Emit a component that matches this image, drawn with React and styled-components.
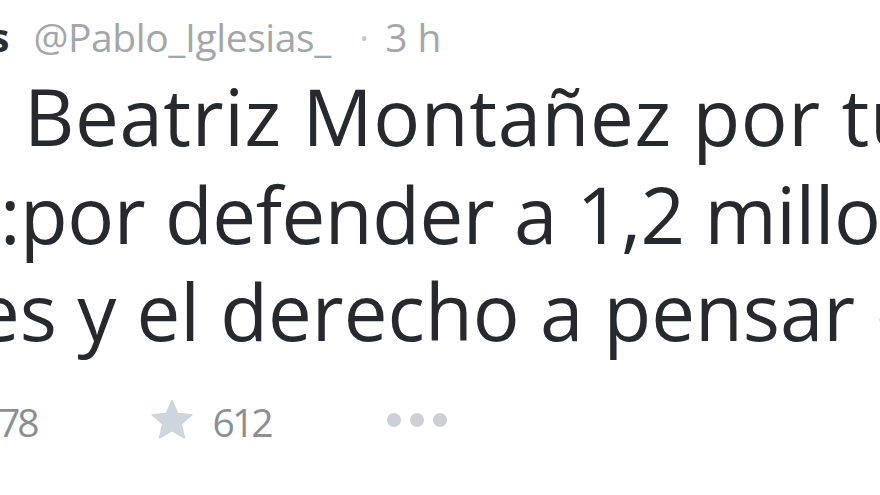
import React from "react";
import styled, { createGlobalStyle } from "styled-components";

const Global = createGlobalStyle`
  html, body { margin: 0; padding: 0; background: #ffffff; }
  #root { width: 880px; height: 495px; }
`;

const Frame = styled.div`
  width: 880px;
  height: 495px;
  overflow: hidden;
  background: #ffffff;
  font-family: "Open Sans", "Noto Sans", sans-serif;
  display: flex;
  flex-direction: column;
`;

const Header = styled.div`
  display: flex;
  align-items: baseline;
  white-space: nowrap;
  font-size: 39px;
  line-height: 48px;
  height: 48px;
  margin-top: 13px;
  margin-left: -10px;
`;

const Name = styled.span`
  font-weight: 700;
  color: #292f33;
`;

const Handle = styled.span`
  color: #a3a7ab;
  letter-spacing: ${(p) => p.$spacing || 0}px;
  margin-left: ${(p) => p.$gap || 0}px;
`;

const Dot = styled.span`
  color: #c6cacd;
  margin-left: ${(p) => p.$before}px;
  margin-right: ${(p) => p.$after}px;
`;

const Body = styled.div`
  margin-top: 7px;
  font-size: 78px;
  line-height: 97.5px;
  color: #262a2e;
  white-space: nowrap;
`;

const Line = styled.div`
  margin-left: ${(p) => p.$indent}px;
  letter-spacing: ${(p) => p.$spacing}px;
  height: 97.5px;
`;

const Actions = styled.div`
  display: flex;
  align-items: center;
  margin-top: 37px;
  height: 48px;
  font-size: 39px;
  color: #8b8f94;
  white-space: nowrap;
`;

const Count = styled.span`
  letter-spacing: -3px;
  margin-left: ${(p) => p.$gap}px;
`;

const StarIcon = styled.svg`
  width: 46px;
  height: 44px;
  margin-left: ${(p) => p.$gap}px;
  margin-top: -4px;
  flex: none;
`;

const More = styled.div`
  display: flex;
  gap: 9px;
  margin-left: ${(p) => p.$gap}px;
  margin-top: -4px;
`;

const MoreDot = styled.span`
  width: 14px;
  height: 14px;
  border-radius: 50%;
  background: #cdd0d4;
`;

export default function App() {
  return (
    <>
      <Global />
      <Frame>
        <Header>
          <Name>s</Name>
          <Handle $gap={24} $spacing={-0.4}>@Pablo_Iglesias_</Handle>
          <Dot $before={28} $after={16}>·</Dot>
          <Handle>3 h</Handle>
        </Header>
        <Body>
          <Line $indent={24} $spacing={0.6}>Beatriz Montañez por tu</Line>
          <Line $indent={0} $spacing={-0.45}>:por defender a 1,2 millones</Line>
          <Line $indent={-24} $spacing={0}>es y el derecho a pensar de</Line>
        </Body>
        <Actions>
          <Count $gap={-2}>78</Count>
          <StarIcon $gap={112} viewBox="0 0 24 24">
            <path
              d="M12 1.5l3.1 7.1 7.6.6-5.8 5 1.8 7.5L12 17.7l-6.7 4 1.8-7.5-5.8-5 7.6-.6z"
              fill="#cdd6de"
              stroke="#cdd6de"
              strokeWidth="1"
              strokeLinejoin="round"
            />
          </StarIcon>
          <Count $gap={18}>612</Count>
          <More $gap={116}>
            <MoreDot />
            <MoreDot />
            <MoreDot />
          </More>
        </Actions>
      </Frame>
    </>
  );
}
